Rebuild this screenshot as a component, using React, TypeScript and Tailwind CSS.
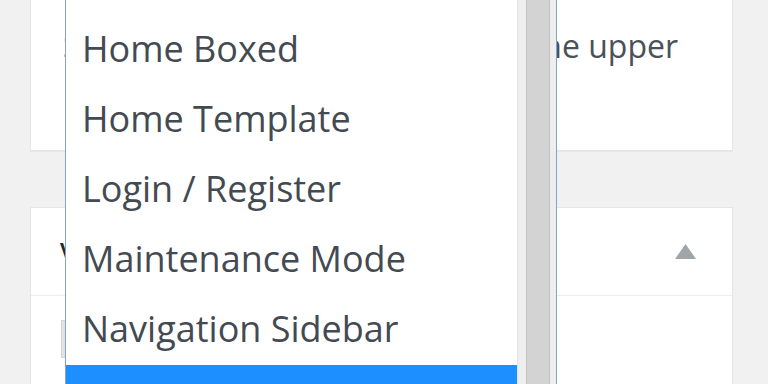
export default function App() {
  const items = ["Home Full Width", "Home Boxed", "Home Template", "Login / Register", "Maintenance Mode", "Navigation Sidebar", "One Page"];

  return (
    <div className="relative h-[384px] w-[768px] overflow-hidden bg-[#f1f1f1] font-['Open_Sans',sans-serif]">
      <div className="flex flex-col gap-[56px] pl-[30px] pr-[35px]">
        {/* page attributes card, top cut off */}
        <div className="h-[151px] border border-t-0 border-[#e5e5e5] bg-white pl-[32px] pr-[54px] pt-[22px] text-[32px] leading-[48px] text-[#4a5158] shadow-[0_1px_1px_rgba(0,0,0,0.04)]">
          <div className="flex justify-between whitespace-nowrap">
            <span>Select</span>
            <span>a template for the upper</span>
          </div>
          <div>part of the page.</div>
        </div>

        {/* second metabox */}
        <div className="h-[200px] border border-[#e5e5e5] bg-white shadow-[0_1px_1px_rgba(0,0,0,0.04)]">
          <div className="flex h-[88px] items-center justify-between border-b border-[#eeeeee] pl-[29px] pr-[36px]">
            <span className="text-[25px] font-semibold text-[#23282d]">Visibility</span>
            <svg width="21" height="15" viewBox="0 0 21 15">
              <path d="M10.5 0 L21 15 L0 15 Z" fill="#a0a5aa" />
            </svg>
          </div>
          <div className="pl-[30px] pt-[24px]">
            <div className="h-[38px] w-[220px] border border-[#d4d4d4] bg-[#e2e2e2]" />
          </div>
        </div>
      </div>

      {/* open select list */}
      <div className="absolute left-[65px] top-[-56px] flex h-[460px] w-[492px] border-x border-[#86a2c8] bg-white">
        <ul className="flex-1">
          {items.map((item) => (
            <li
              key={item}
              className={
                item === "One Page"
                  ? "mt-px h-[70px] whitespace-nowrap bg-[#1e8fff] pl-[16px] text-[36px] leading-[70px] text-white"
                  : "h-[70px] whitespace-nowrap pl-[16px] text-[36px] leading-[70px] text-[#444a51]"
              }
            >
              {item}
            </li>
          ))}
        </ul>
        <div className="flex w-[39px] border-l border-[#e3e3e3] bg-[#eeeeee] pl-[8px] pr-[6px]">
          <div className="w-[24px] border-x border-[#c4c4c4] bg-[#d3d3d3]" />
        </div>
      </div>
    </div>
  );
}
